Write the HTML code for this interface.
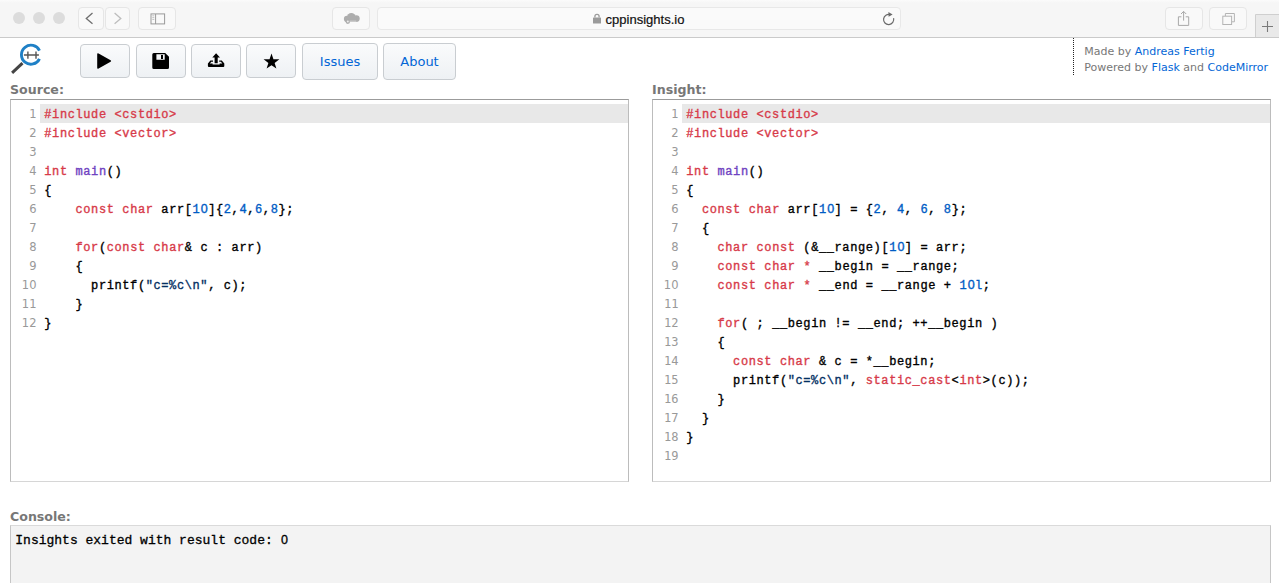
<!DOCTYPE html>
<html lang="en">
<head>
<meta charset="utf-8">
<title>C++ Insights</title>
<style>
html,body{margin:0;padding:0;background:#fff;}
body{width:1279px;height:583px;position:relative;overflow:hidden;font-family:"DejaVu Sans","Liberation Sans",sans-serif;}
.abs{position:absolute;}
/* browser chrome */
#chrome{position:absolute;left:0;top:0;width:1279px;height:37px;background:linear-gradient(#fbfbfb 0,#f6f6f6 3px);border-bottom:1px solid #cacaca;box-sizing:content-box;}
.dot{position:absolute;top:12.4px;width:12px;height:12px;border-radius:50%;background:#dcdcdc;}
.cbtn{position:absolute;box-sizing:border-box;border:1px solid #e6e6e6;border-radius:4px;background:#f9f9f9;}
#url{position:absolute;left:377px;top:7px;width:524px;height:23px;box-sizing:border-box;border:1px solid #e8e8e8;border-radius:4px;background:#fafafa;}
#urltext{position:absolute;left:605.6px;top:12px;font:13px/16px "Liberation Sans",sans-serif;color:#111;-webkit-text-stroke:0.2px;white-space:nowrap;}
/* page toolbar */
.btn{position:absolute;box-sizing:border-box;border:1px solid #c9cdd1;border-radius:4px;background:linear-gradient(#fafbfc,#eef1f4);}
.btn.t{top:43px;height:37px;font:13px/35px "DejaVu Sans",sans-serif;color:#0366d6;text-align:center;}
.btn.i{top:44px;height:34px;width:50px;}
.btn svg{position:absolute;}
#credits{position:absolute;left:1073px;top:38px;height:37px;border-left:1px dotted #222;}
.cr{position:absolute;white-space:nowrap;font:11px/16px "DejaVu Sans",sans-serif;color:#777;}
.cr a{color:#0366d6;text-decoration:none;}
.lbl{position:absolute;font:bold 12.6px/16px "DejaVu Sans",sans-serif;color:#777;white-space:nowrap;}
/* editors */
.ed{position:absolute;top:99px;width:619px;height:383px;box-sizing:border-box;border:1px solid #bcbcbc;border-top-color:#9b9b9b;border-bottom-color:#d6d6d6;background:#fff;overflow:hidden;}
.ln{position:absolute;left:0;width:29px;height:19px;}
.ln .n{position:absolute;left:0;top:1px;width:25.5px;text-align:right;font:11.5px/19px "DejaVu Sans",sans-serif;color:#999;}
.ln .n.m{font:12px/19px "DejaVu Sans Mono",monospace;}
.ln pre{position:absolute;left:33.3px;top:2px;-webkit-text-stroke:0.35px;letter-spacing:0.6px;margin:0;font:12px/19px "Liberation Mono",monospace;color:#000;white-space:pre;}
.ln.act::before{content:"";position:absolute;left:29px;top:0;width:600px;height:19px;background:#e8e8e8;}
.z{display:inline-block;width:7.8px;text-align:center;letter-spacing:0;font-family:"Liberation Sans",sans-serif;font-size:12.5px;line-height:1;}
.k{color:#d73a49;}
.d{color:#6f42c1;}
.n2{color:#005cc5;}
.s{color:#032f62;}
#console{position:absolute;left:10px;top:525px;width:1261px;height:70px;box-sizing:border-box;border:1px solid #c6c6c6;border-top-color:#dadada;background:#f3f3f3;}
#console pre{position:absolute;left:4.3px;top:7.4px;margin:0;font:13px/16px "Liberation Mono",monospace;color:#000;-webkit-text-stroke:0.3px;}
</style>
</head>
<body>
<div id="chrome">
  <div class="dot" style="left:13px"></div>
  <div class="dot" style="left:33px"></div>
  <div class="dot" style="left:53px"></div>
  <div class="cbtn" style="left:77.5px;top:7px;width:26px;height:23px;"></div>
  <div class="cbtn" style="left:104.5px;top:7px;width:25px;height:23px;"></div>
  <div class="cbtn" style="left:138px;top:7px;width:38px;height:23px;"></div>
  <div class="cbtn" style="left:332px;top:7px;width:38px;height:23px;"></div>
  <div id="url"></div>
  <div id="urltext">cppinsights.io</div>
  <div class="cbtn" style="left:1164.5px;top:7px;width:38px;height:23px;"></div>
  <div class="cbtn" style="left:1209.3px;top:7px;width:38px;height:23px;"></div>

  <svg class="abs" style="left:0;top:0" width="1279" height="38" viewBox="0 0 1279 38">
    <path d="M92.5 13.1L86.3 18.5L92.5 23.7" fill="none" stroke="#6e6e6e" stroke-width="1.3"/>
    <path d="M114.6 13.1L120.8 18.5L114.6 23.7" fill="none" stroke="#bdbdbd" stroke-width="1.3"/>
    <rect x="151" y="13.9" width="13.6" height="10" fill="none" stroke="#9a9a9a" stroke-width="1"/>
    <path d="M155.6 14V24" stroke="#9a9a9a" stroke-width="1"/>
    <path d="M152.3 15.8H154.3M152.3 17.6H154.3M152.3 19.4H154.3" stroke="#b5b5b5" stroke-width="0.8"/>
    <!-- cloud -->
    <g fill="#adadad"><circle cx="347" cy="18.9" r="3.1"/><circle cx="351.3" cy="17.4" r="4.4"/><circle cx="356.3" cy="18.6" r="3.4"/><rect x="347" y="17" width="9.3" height="5"/><circle cx="347.8" cy="21.6" r="2.3"/></g>
    <circle cx="347.8" cy="21.6" r="1" fill="#ededed"/>
    <path d="M349.6 21.2H356.4" stroke="#dcdcdc" stroke-width="0.9"/>
    <!-- lock -->
    <path d="M594.9 17.6V16.4a2.1 2.1 0 0 1 4.2 0V17.6" fill="none" stroke="#9b9b9b" stroke-width="1.3"/>
    <rect x="593" y="17.4" width="8" height="6.2" rx="0.6" fill="#9b9b9b"/>
    <!-- reload -->
    <path d="M890.2 14.6 A5.1 5.1 0 1 0 893.6 18.2" fill="none" stroke="#6a6a6a" stroke-width="1.2"/>
    <path d="M888.4 12.1L892.6 14.5L888.6 16.7Z" fill="#6a6a6a"/>
    <!-- share -->
    <path d="M1181.4 16.8H1178.4V25.4H1188.7V16.8H1185.7" fill="none" stroke="#a8a8a8" stroke-width="1"/>
    <path d="M1183.6 20.6V11.6M1181 14L1183.6 11.4L1186.2 14" fill="none" stroke="#a8a8a8" stroke-width="1"/>
    <!-- tabs -->
    <path d="M1225.4 16V13.5H1234.4V21.8H1232" fill="none" stroke="#b4b4b4" stroke-width="1"/>
    <rect x="1222.8" y="16.2" width="8.8" height="8.3" fill="none" stroke="#b4b4b4" stroke-width="1"/>
    <!-- new tab -->
    <path d="M1255.5 37V14.5H1280" fill="none" stroke="#cfcfcf" stroke-width="1"/><rect x="1256" y="15" width="24" height="22" fill="#e9e9e9"/>
    <path d="M1262 26.5H1273M1267.5 21V32" stroke="#7a7a7a" stroke-width="1.1"/>
  </svg>
</div>

<div class="btn i" style="left:79.5px"></div>
<div class="btn i" style="left:135.5px"></div>
<div class="btn i" style="left:191px"></div>
<div class="btn i" style="left:246px"></div>
<div class="btn t" style="left:302px;width:76px">Issues</div>
<div class="btn t" style="left:383px;width:73px">About</div>


<svg class="abs" style="left:0;top:0" width="1279" height="100" viewBox="0 0 1279 100">
  <!-- logo -->
  <path d="M39.5 50.6 A9.5 9.5 0 1 0 39.5 58.8" fill="none" stroke="#1f80c6" stroke-width="2.9" stroke-linecap="butt"/>
  <path d="M23.9 55H38.9M27.9 51.5V58.7M36 51.5V58.7" fill="none" stroke="#555" stroke-width="1.4"/>
  <path d="M22.5 63.1L12.1 72.9" fill="none" stroke="#444" stroke-width="3" stroke-linecap="butt"/>
  <!-- play -->
  <path d="M97.2 54.2 Q97.2 52.6 98.6 53.4 L110.6 60.2 Q111.8 61 110.6 61.8 L98.6 68.6 Q97.2 69.4 97.2 67.8Z" fill="#000"/>
  <!-- floppy -->
  <path d="M153.8 53 H165.2 L169 56.8 V67.5 Q169 69 167.5 69 H153.8 Q152.3 69 152.3 67.5 V54.5 Q152.3 53 153.8 53Z M156.4 54.3 V59.7 H164.7 V54.3Z M161 55 V59 H163 V55Z" fill="#000" fill-rule="evenodd"/>
  <!-- upload -->
  <path d="M216.1 53.2 L220 57.4 H217.7 V63.2 H214.6 V57.4 H212.3Z" fill="#000"/>
  <path d="M210.4 60.6 H213 V61.8 H211.3 L209.9 63.4 H212.6 V64.6 H219.6 V63.4 H222.3 L220.9 61.8 H219.2 V60.6 H221.8 L224.3 63.6 V66 Q224.3 67 223.3 67 H208.9 Q207.9 67 207.9 66 V63.6Z" fill="#000"/>
  <!-- star -->
  <path d="M271.50 53.60 L273.44 59.23 L279.39 59.34 L274.64 62.92 L276.38 68.61 L271.50 65.20 L266.62 68.61 L268.36 62.92 L263.61 59.34 L269.56 59.23Z" fill="#000"/>
</svg>
<div id="credits"></div>
<div class="cr" style="left:1084.3px;top:44px">Made by <a>Andreas Fertig</a></div>
<div class="cr" style="left:1084.3px;top:60px">Powered by <a>Flask</a> and <a>CodeMirror</a></div>

<div class="lbl" style="left:10px;top:82px">Source:</div>
<div class="lbl" style="left:652px;top:82px">Insight:</div>
<div class="lbl" style="left:10px;top:508.6px">Console:</div>

<div class="ed" id="src" style="left:10px">
<div class="ln act" style="top:4px"><span class="n">1</span><pre><span class="k">#include &lt;cstdio&gt;</span></pre></div>
<div class="ln" style="top:23px"><span class="n">2</span><pre><span class="k">#include &lt;vector&gt;</span></pre></div>
<div class="ln" style="top:42px"><span class="n">3</span><pre></pre></div>
<div class="ln" style="top:61px"><span class="n">4</span><pre><span class="k">int</span> <span class="d">main</span>()</pre></div>
<div class="ln" style="top:80px"><span class="n">5</span><pre>{</pre></div>
<div class="ln" style="top:99px"><span class="n">6</span><pre>    <span class="k">const</span> <span class="k">char</span> arr[<span class="n2">1<span class="z">0</span></span>]{<span class="n2">2</span>,<span class="n2">4</span>,<span class="n2">6</span>,<span class="n2">8</span>};</pre></div>
<div class="ln" style="top:118px"><span class="n">7</span><pre></pre></div>
<div class="ln" style="top:137px"><span class="n">8</span><pre>    <span class="k">for</span>(<span class="k">const</span> <span class="k">char</span>&amp; c : arr)</pre></div>
<div class="ln" style="top:156px"><span class="n">9</span><pre>    {</pre></div>
<div class="ln" style="top:175px"><span class="n">10</span><pre>      printf(<span class="s">"c=%c\n"</span>, c);</pre></div>
<div class="ln" style="top:194px"><span class="n">11</span><pre>    }</pre></div>
<div class="ln" style="top:213px"><span class="n">12</span><pre>}</pre></div>
</div>
<div class="ed" id="ins" style="left:652px">
<div class="ln act" style="top:4px"><span class="n">1</span><pre><span class="k">#include &lt;cstdio&gt;</span></pre></div>
<div class="ln" style="top:23px"><span class="n">2</span><pre><span class="k">#include &lt;vector&gt;</span></pre></div>
<div class="ln" style="top:42px"><span class="n">3</span><pre></pre></div>
<div class="ln" style="top:61px"><span class="n">4</span><pre><span class="k">int</span> <span class="d">main</span>()</pre></div>
<div class="ln" style="top:80px"><span class="n">5</span><pre>{</pre></div>
<div class="ln" style="top:99px"><span class="n">6</span><pre>  <span class="k">const</span> <span class="k">char</span> arr[<span class="n2">1<span class="z">0</span></span>] = {<span class="n2">2</span>, <span class="n2">4</span>, <span class="n2">6</span>, <span class="n2">8</span>};</pre></div>
<div class="ln" style="top:118px"><span class="n">7</span><pre>  {</pre></div>
<div class="ln" style="top:137px"><span class="n">8</span><pre>    <span class="k">char</span> <span class="k">const</span> (&amp;__range)[<span class="n2">1<span class="z">0</span></span>] = arr;</pre></div>
<div class="ln" style="top:156px"><span class="n">9</span><pre>    <span class="k">const</span> <span class="k">char</span> <span class="k">*</span> __begin = __range;</pre></div>
<div class="ln" style="top:175px"><span class="n">10</span><pre>    <span class="k">const</span> <span class="k">char</span> <span class="k">*</span> __end = __range + <span class="n2">1<span class="z">0</span>l</span>;</pre></div>
<div class="ln" style="top:194px"><span class="n m">11</span><pre></pre></div>
<div class="ln" style="top:213px"><span class="n m">12</span><pre>    <span class="k">for</span>( ; __begin != __end; ++__begin )</pre></div>
<div class="ln" style="top:232px"><span class="n m">13</span><pre>    {</pre></div>
<div class="ln" style="top:251px"><span class="n m">14</span><pre>      <span class="k">const</span> <span class="k">char</span> &amp; c = *__begin;</pre></div>
<div class="ln" style="top:270px"><span class="n m">15</span><pre>      printf(<span class="s">"c=%c\n"</span>, <span class="k">static_cast</span>&lt;<span class="k">int</span>&gt;(c));</pre></div>
<div class="ln" style="top:289px"><span class="n m">16</span><pre>    }</pre></div>
<div class="ln" style="top:308px"><span class="n m">17</span><pre>  }</pre></div>
<div class="ln" style="top:327px"><span class="n m">18</span><pre>}</pre></div>
<div class="ln" style="top:346px"><span class="n m">19</span><pre></pre></div>
</div>

<div id="console"><pre>Insights exited with result code: <span class="z">0</span></pre></div>
</body>
</html>
